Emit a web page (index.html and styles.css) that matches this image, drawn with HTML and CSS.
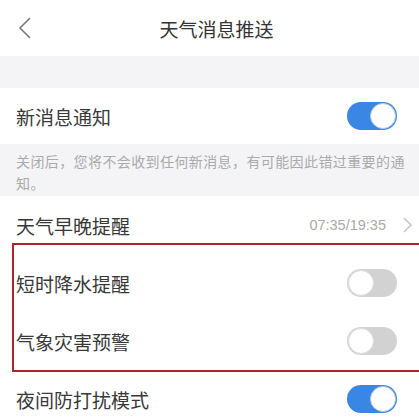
FILE: index.html
```html
<!DOCTYPE html>
<html lang="zh">
<head>
<meta charset="utf-8">
<link rel="stylesheet" href="styles.css">
</head>
<body>
<div class="page">
  <header class="nav">
    <svg class="back" width="14" height="22" viewBox="0 0 14 22"><path d="M12 1 L2 11 L12 21" fill="none" stroke="#7a7a7a" stroke-width="1.6"/></svg>
    <div class="title">天气消息推送</div>
  </header>
  <div class="band"></div>
  <div class="row first">
    <span class="label">新消息通知</span>
    <span class="toggle on"><span class="knob"></span></span>
  </div>
  <div class="note">关闭后，您将不会收到任何新消息，有可能因此错过重要的通知。</div>
  <div class="row">
    <span class="label">天气早晚提醒</span>
    <span class="value">07:35/19:35</span>
    <svg class="chev" width="9" height="16" viewBox="0 0 9 16"><path d="M1 1 L8 8 L1 15" fill="none" stroke="#c4c4c4" stroke-width="1.5"/></svg>
  </div>
  <div class="row">
    <span class="label">短时降水提醒</span>
    <span class="toggle off"><span class="knob"></span></span>
  </div>
  <div class="row">
    <span class="label">气象灾害预警</span>
    <span class="toggle off"><span class="knob"></span></span>
  </div>
  <div class="row">
    <span class="label">夜间防打扰模式</span>
    <span class="toggle on"><span class="knob"></span></span>
  </div>
  <div class="highlight"></div>
</div>
</body>
</html>
```
FILE: styles.css
```css
html, body { margin: 0; padding: 0; background: #fff; }
body { font-family: "Noto Sans CJK SC", "Liberation Sans", sans-serif; color: #333; overflow: hidden; }
.page { position: relative; width: 419px; height: 419px; overflow: hidden; }
.nav { height: 56px; display: flex; align-items: center; justify-content: center; position: relative; }
.back { position: absolute; left: 18px; top: 17px; }
.title { font-size: 19px; color: #333; margin-left: 14px; }
.band { height: 32px; background: #f4f4f6; }
.row { height: 58px; display: flex; align-items: center; padding: 0 22px 0 16px; background: #fff; }
.row.first { height: 56px; }
.label { font-size: 19px; color: #383838; flex: 1; }
.value { font-family: "Liberation Sans", sans-serif; font-size: 14.5px; color: #aaa; margin-right: 17px; }
.chev { margin-right: -15px; }
.note { background: #f4f4f6; color: #aaa; font-size: 14px; letter-spacing: 0.4px; line-height: 22px; padding: 6px 10px 7px 16px; height: 39px; }
.toggle { width: 50px; height: 28px; border-radius: 14px; position: relative; box-sizing: border-box; }
.toggle.on { background: #3a86e5; }
.toggle.off { background: #d2d2d2; }
.knob { position: absolute; top: 1px; width: 26px; height: 26px; border-radius: 50%; background: #fff; box-sizing: border-box; border: 1px solid #cfcfcf; }
.toggle.on .knob { right: 1px; border-color: #b9c8d8; }
.toggle.off .knob { left: 1px; border-color: #dcdcdc; }
.highlight { position: absolute; left: 12px; top: 243px; width: 412px; height: 129px; border: 2.5px solid #a8262c; box-sizing: border-box; }
```
